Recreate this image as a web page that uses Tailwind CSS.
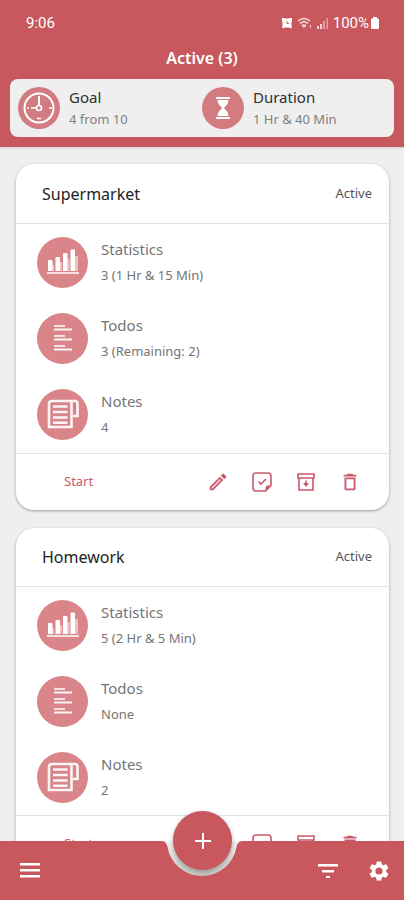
<!DOCTYPE html>
<html lang="en">
<head>
<meta charset="utf-8">
<meta name="viewport" content="width=device-width, initial-scale=1">
<title>Active tasks</title>
<script src="https://cdn.jsdelivr.net/npm/@tailwindcss/browser@4"></script>
</head>
<body class="relative flex h-dvh flex-col overflow-hidden bg-[#efefef] font-['Noto_Sans',sans-serif] text-[#757575]">

<svg class="absolute size-0" aria-hidden="true">
  <symbol id="stats" viewBox="0 0 34 26">
    <path fill="#fff" opacity=".5" d="M6 16h2v6H6zM14 13h2v9h-2zM21.500 10h2v12h-2zM29 7h3v15h-3z"/>
    <path fill="#fff" d="M2 12q0-1 1-1h2.500q1 0 1 1v10H2zM9.500 9q0-1 1-1H13q1 0 1 1v13H9.500zM17 5q0-1 1-1h2.500q1 0 1 1v17H17zM24.500 1.500q0-1 1-1H28q1 0 1 1V22h-4.500z"/>
    <path fill="#fff" opacity=".75" d="M1 23h32v2H1z"/>
  </symbol>
  <symbol id="todos" viewBox="0 0 18 28">
    <path fill="#fff" opacity=".75" d="M0 1h11v2H0zM0 11h11v2H0zM0 21h11v2H0z"/>
    <path fill="#fff" opacity=".9" d="M0 4.500h18v2H0zM0 14.500h18v2H0zM0 24.500h18v2H0z"/>
  </symbol>
  <symbol id="notes" viewBox="0 0 32 30">
    <g fill="none" stroke="#fff" stroke-opacity=".92">
      <path stroke-width="2.600" d="M24.500 28H2V5q0-3 3-3h19.500z"/>
      <path stroke-width="2.600" d="M25.800 2H28q2.500 0 2.500 2.500V17h-4.700"/>
      <path stroke-width="2.400" d="M6 7.500h14.500M6 13h14.500M6 18.500h14.500M6 23.800h14.500"/>
    </g>
  </symbol>
  <symbol id="edit" viewBox="0 0 24 24">
    <path fill="currentColor" d="M14.060 9.020l.92.92L5.920 19H5v-.92l9.060-9.060M17.660 3c-.25 0-.51.100-.7.290l-1.830 1.830 3.750 3.750 1.830-1.830c.39-.39.390-1.020 0-1.410l-2.340-2.340c-.2-.2-.45-.29-.68-.29zm-3.600 3.190L3 17.250V21h3.750L17.810 9.940l-3.750-3.750z"/>
  </symbol>
  <symbol id="check" viewBox="0 0 22 22">
    <path fill="none" stroke="currentColor" stroke-width="1.600" d="M14.500 20H5q-3 0-3-3V5q0-3 3-3h12q3 0 3 3v9.500z"/>
    <path fill="currentColor" d="M14.500 20v-3q0-2.500 2.500-2.500h3z"/>
    <path fill="none" stroke="currentColor" stroke-width="1.600" d="M7.500 10.500l2.500 2.500 5-5"/>
  </symbol>
  <symbol id="archive" viewBox="0 0 20 20">
    <path fill="none" stroke="currentColor" stroke-width="1.600" d="M2 2h16v4H2zM3 6v12h14V6"/>
    <path fill="currentColor" d="M9.200 8.500h1.600V11H13l-3 4-3-4h2.200z"/>
  </symbol>
  <symbol id="trash" viewBox="0 0 24 24">
    <path fill="currentColor" d="M16 9v10H8V9h8m-1.500-6h-5l-1 1H5v2h14V4h-3.500l-1-1zM18 7H6v12c0 1.100.9 2 2 2h8c1.100 0 2-.9 2-2V7z"/>
  </symbol>
</svg>

<header class="relative z-10 shrink-0 bg-[#c8585d] px-2.5 pb-2.5 shadow-sm">
  <div class="flex h-11 items-center justify-between pl-4 pr-1.5 pt-0.5 text-white">
    <span class="font-[Roboto] text-[15px]">9:06</span>
    <div class="flex items-center gap-1 pr-2">
      <svg class="size-3" viewBox="0 0 12 12" aria-hidden="true"><path fill="#fff" d="M1 1h2.500l1 .5h3l1-.5H11v3l-.5 1v4l.5 2H9l-1-.5H4L3 11H1l.5-2V5L1 4z"/><path fill="none" stroke="#c8585d" d="M6 4v2.500h2"/></svg>
      <svg class="h-3 w-4" viewBox="0 0 16 12" aria-hidden="true"><g fill="none" stroke="#fff" stroke-opacity=".8" stroke-width="1.600"><path d="M1 4q6-5 12 0M3 6.500q4-3.500 8 0M5 9q2-2 4 0"/></g><path fill="#fff" fill-opacity=".8" d="M5.500 9h3L7 11zM13 8h1v3h-1z"/></svg>
      <svg class="h-3 w-3" viewBox="0 0 12 12" aria-hidden="true"><path fill="#fff" fill-opacity=".75" d="M0 9h2v3H0zM3 7h2v5H3z"/><path fill="#fff" fill-opacity=".45" d="M6 4h2v8H6zM9.500 1H11v11H9.500z"/></svg>
      <div class="flex items-center gap-px">
        <span class="font-[Roboto] text-[15px]">100%</span>
        <svg class="h-3 w-2.5" viewBox="0 0 10 12" aria-hidden="true"><path fill="#fff" d="M3 0h4v1.500h1q1 0 1 1V11q0 1-1 1H2q-1 0-1-1V2.500q0-1 1-1h1z"/></svg>
      </div>
    </div>
  </div>
  <h1 class="flex h-[35px] items-start justify-center pt-1 text-base leading-5 font-semibold text-white">Active (3)</h1>
  <section class="grid h-[58px] grid-cols-2 items-center rounded-lg bg-[#efefef] px-2">
    <div class="flex items-center gap-[9px]">
      <span class="flex size-[42px] shrink-0 items-center justify-center rounded-full bg-[#d27c81]">
        <svg class="size-8" viewBox="0 0 32 32" aria-hidden="true"><g fill="none" stroke="#fff"><circle cx="16" cy="16" r="14.500" stroke-width="2"/><path d="M16 4v9" stroke-width="2"/><circle cx="16" cy="16" r="2.500" stroke-width="1.600"/><path d="M4 16h2M8 16h5M26 16h3M14 26.500h4" stroke-width="1.500"/></g></svg>
      </span>
      <div>
        <h2 class="text-[15px] leading-5 text-[#303030]">Goal</h2>
        <p class="mt-0.5 text-[13px] leading-5 text-[#808080]">4 from 10</p>
      </div>
    </div>
    <div class="flex items-center gap-[9px]">
      <span class="flex size-[42px] shrink-0 items-center justify-center rounded-full bg-[#d27c81]">
        <svg class="h-[22px] w-3.5" viewBox="0 0 14 22" aria-hidden="true"><path fill="#fff" d="M0 0h14v2H0zM1.500 3h11q0 4-4 7v2q4 3 4 7h-11q0-4 4-7v-2q-4-3-4-7zM0 20h14v2H0z"/></svg>
      </span>
      <div>
        <h2 class="text-[15px] leading-5 text-[#303030]">Duration</h2>
        <p class="mt-0.5 text-[13px] leading-5 text-[#808080]">1 Hr &amp; 40 Min</p>
      </div>
    </div>
  </section>
</header>

<main class="flex flex-1 flex-col gap-[18px] overflow-y-auto pr-[15px] pl-4 pt-[17px] pb-20 [scrollbar-width:none]">
  <article class="shrink-0 rounded-[18px] bg-white shadow-[0_1px_3px_rgba(0,0,0,0.35)]">
    <div class="flex h-[60px] items-center justify-between border-b border-[#e4e4e4] pl-[26px] pr-[17px]">
      <h2 class="text-base text-[#222]">Supermarket</h2>
      <span class="text-[13px] text-[#555]">Active</span>
    </div>
    <ul class="h-[230px] border-b border-[#e4e4e4] pl-[21px]">
      <li class="flex h-[76px] items-center gap-[13px]">
        <span class="flex size-[51px] items-center justify-center rounded-full bg-[#d98589]"><svg class="h-[26px] w-[34px]" aria-hidden="true"><use href="#stats"/></svg></span>
        <div><h3 class="text-[15px] leading-6">Statistics</h3><p class="mt-0.5 text-[13px] leading-6">3 (1 Hr &amp; 15 Min)</p></div>
      </li>
      <li class="flex h-[76px] items-center gap-[13px]">
        <span class="flex size-[51px] items-center justify-center rounded-full bg-[#d98589]"><svg class="h-7 w-[18px]" aria-hidden="true"><use href="#todos"/></svg></span>
        <div><h3 class="text-[15px] leading-6">Todos</h3><p class="mt-0.5 text-[13px] leading-6">3 (Remaining: 2)</p></div>
      </li>
      <li class="flex h-[76px] items-center gap-[13px]">
        <span class="flex size-[51px] items-center justify-center rounded-full bg-[#d98589]"><svg class="h-[30px] w-8" aria-hidden="true"><use href="#notes"/></svg></span>
        <div><h3 class="text-[15px] leading-6">Notes</h3><p class="mt-0.5 text-[13px] leading-6">4</p></div>
      </li>
    </ul>
    <div class="flex h-14 items-center justify-between pl-12 pr-[27px] text-[#c8586a]">
      <button class="text-[13px]">Start</button>
      <div class="flex items-center gap-5">
        <button class="flex size-6 items-center justify-center" aria-label="Edit"><svg class="size-[22px]"><use href="#edit"/></svg></button>
        <button class="flex size-6 items-center justify-center" aria-label="Complete"><svg class="size-[22px]"><use href="#check"/></svg></button>
        <button class="flex size-6 items-center justify-center" aria-label="Archive"><svg class="size-5"><use href="#archive"/></svg></button>
        <button class="flex size-6 items-center justify-center" aria-label="Delete"><svg class="size-[22px]"><use href="#trash"/></svg></button>
      </div>
    </div>
  </article>

  <article class="shrink-0 rounded-[18px] bg-white shadow-[0_1px_3px_rgba(0,0,0,0.35)]">
    <div class="flex h-[59px] items-center justify-between border-b border-[#e4e4e4] pl-[26px] pr-[17px]">
      <h2 class="text-base text-[#222]">Homework</h2>
      <span class="text-[13px] text-[#555]">Active</span>
    </div>
    <ul class="h-[229px] border-b border-[#e4e4e4] pl-[21px]">
      <li class="flex h-[76px] items-center gap-[13px]">
        <span class="flex size-[51px] items-center justify-center rounded-full bg-[#d98589]"><svg class="h-[26px] w-[34px]" aria-hidden="true"><use href="#stats"/></svg></span>
        <div><h3 class="text-[15px] leading-6">Statistics</h3><p class="mt-0.5 text-[13px] leading-6">5 (2 Hr &amp; 5 Min)</p></div>
      </li>
      <li class="flex h-[76px] items-center gap-[13px]">
        <span class="flex size-[51px] items-center justify-center rounded-full bg-[#d98589]"><svg class="h-7 w-[18px]" aria-hidden="true"><use href="#todos"/></svg></span>
        <div><h3 class="text-[15px] leading-6">Todos</h3><p class="mt-0.5 text-[13px] leading-6">None</p></div>
      </li>
      <li class="flex h-[76px] items-center gap-[13px]">
        <span class="flex size-[51px] items-center justify-center rounded-full bg-[#d98589]"><svg class="h-[30px] w-8" aria-hidden="true"><use href="#notes"/></svg></span>
        <div><h3 class="text-[15px] leading-6">Notes</h3><p class="mt-0.5 text-[13px] leading-6">2</p></div>
      </li>
    </ul>
    <div class="flex h-14 items-center justify-between pl-12 pr-[27px] text-[#c8586a]">
      <button class="text-[13px]">Start</button>
      <div class="flex items-center gap-5">
        <button class="flex size-6 items-center justify-center" aria-label="Edit"><svg class="size-[22px]"><use href="#edit"/></svg></button>
        <button class="flex size-6 items-center justify-center" aria-label="Complete"><svg class="size-[22px]"><use href="#check"/></svg></button>
        <button class="flex size-6 items-center justify-center" aria-label="Archive"><svg class="size-5"><use href="#archive"/></svg></button>
        <button class="flex size-6 items-center justify-center" aria-label="Delete"><svg class="size-[22px]"><use href="#trash"/></svg></button>
      </div>
    </div>
  </article>
</main>

<nav class="absolute inset-x-0 bottom-0 z-20 grid h-[59px] grid-cols-[1fr_88px_1fr] text-white">
  <div class="flex items-center bg-[#c8585d] pl-5">
    <button aria-label="Menu"><svg class="h-[15px] w-5" viewBox="0 0 20 15"><path fill="#fff" d="M0 0h20v2.500H0zM0 6h20v2.500H0zM0 12h20v2.500H0z"/></svg></button>
  </div>
  <div class="relative">
    <svg class="h-[59px] w-22" viewBox="0 0 88 59" aria-hidden="true">
      <defs><linearGradient id="rim" x1="0" y1="0" x2="0" y2="1"><stop offset="0" stop-color="#f4f4f4"/><stop offset="1" stop-color="#bdbdb8"/></linearGradient></defs>
      <path fill="url(#rim)" d="M3 0h82l-5 8a35 35 0 0 1-72 0z"/>
      <path fill="#c8585d" d="M0 0H4C7 0 9 3 9.500 6A35 35 0 0 0 78.500 6C79 3 81 0 84 0H88V59H0z"/>
    </svg>
    <button class="absolute -top-[30px] left-[15px] flex size-[59px] items-center justify-center rounded-full bg-[#c8585d] shadow-[0_2px_5px_rgba(0,0,0,0.3)]" aria-label="Add task">
      <svg class="size-4" viewBox="0 0 16 16"><path fill="#fff" d="M7 0h2v7h7v2H9v7H7V9H0V7h7z"/></svg>
    </button>
  </div>
  <div class="flex items-center justify-end gap-[30px] bg-[#c8585d] pr-[14px]">
    <button aria-label="Filter"><svg class="h-[14px] w-5" viewBox="0 0 20 14"><path fill="#fff" d="M0 0h20v2.500H0zM4 6h12v2.500H4zM8 12h4v2.500H8z"/></svg></button>
    <button aria-label="Settings"><svg class="size-[22px]" viewBox="1 1 22 22"><path fill="#fff" d="M19.140 12.940c.04-.3.060-.61.060-.94s-.02-.64-.07-.94l2.030-1.580a.49.490 0 0 0 .12-.61l-1.920-3.320a.49.490 0 0 0-.59-.22l-2.390.96a7 7 0 0 0-1.620-.94l-.36-2.540A.48.480 0 0 0 13.920 2.400h-3.840a.47.470 0 0 0-.47.410l-.36 2.540c-.59.240-1.130.570-1.620.94l-2.390-.96a.48.480 0 0 0-.59.220L2.740 8.870a.47.470 0 0 0 .12.610l2.030 1.580c-.05.300-.09.630-.09.940s.02.640.07.940l-2.030 1.580a.49.490 0 0 0-.12.610l1.920 3.320c.12.220.37.290.59.220l2.390-.96c.5.380 1.030.700 1.620.940l.36 2.540c.05.240.24.410.48.410h3.840c.24 0 .44-.17.470-.41l.36-2.540a7 7 0 0 0 1.620-.94l2.390.96c.22.080.47 0 .59-.22l1.920-3.320a.47.470 0 0 0-.12-.61zM12 15.600a3.600 3.600 0 1 1 0-7.200 3.600 3.600 0 0 1 0 7.200z"/></svg></button>
  </div>
</nav>
</body>
</html>
